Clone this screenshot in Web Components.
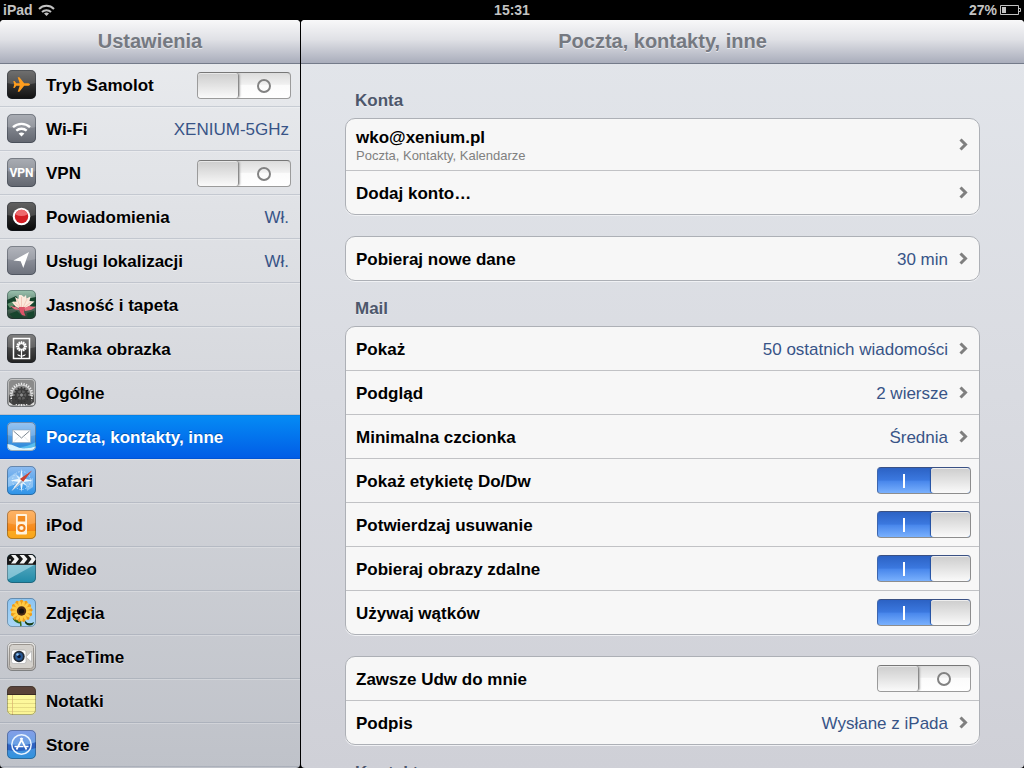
<!DOCTYPE html>
<html lang="pl">
<head>
<meta charset="utf-8">
<meta name="viewport" content="width=device-width, initial-scale=1">
<title>Ustawienia</title>
<style>
  html, body { margin: 0; height: 100%; background: #000; }
  body { font-family: "Liberation Sans", Arial, Helvetica, sans-serif; overflow: hidden; }
</style>
</head>
<body>
<settings-app>
  <status-bar slot="status"></status-bar>
  <settings-pane slot="side" heading="Ustawienia" kind="side">
    <nav-row icon="plane" type="switch">Tryb Samolot</nav-row>
    <nav-row icon="wifi" value="XENIUM-5GHz">Wi-Fi</nav-row>
    <nav-row icon="vpn" type="switch">VPN</nav-row>
    <nav-row icon="alerts" value="Wł.">Powiadomienia</nav-row>
    <nav-row icon="location" value="Wł.">Usługi lokalizacji</nav-row>
    <nav-row icon="lotus">Jasność i tapeta</nav-row>
    <nav-row icon="frame">Ramka obrazka</nav-row>
    <nav-row icon="gear">Ogólne</nav-row>
    <nav-row icon="mail" selected>Poczta, kontakty, inne</nav-row>
    <nav-row icon="safari">Safari</nav-row>
    <nav-row icon="ipod">iPod</nav-row>
    <nav-row icon="video">Wideo</nav-row>
    <nav-row icon="photos">Zdjęcia</nav-row>
    <nav-row icon="facetime">FaceTime</nav-row>
    <nav-row icon="notes">Notatki</nav-row>
    <nav-row icon="store">Store</nav-row>
  </settings-pane>
  <settings-pane slot="main" heading="Poczta, kontakty, inne" kind="main">
    <settings-group heading="Konta">
      <group-row detail="Poczta, Kontakty, Kalendarze">wko@xenium.pl</group-row>
      <group-row>Dodaj konto…</group-row>
    </settings-group>
    <settings-group>
      <group-row value="30 min">Pobieraj nowe dane</group-row>
    </settings-group>
    <settings-group heading="Mail">
      <group-row value="50 ostatnich wiadomości">Pokaż</group-row>
      <group-row value="2 wiersze">Podgląd</group-row>
      <group-row value="Średnia">Minimalna czcionka</group-row>
      <group-row type="switch" checked>Pokaż etykietę Do/Dw</group-row>
      <group-row type="switch" checked>Potwierdzaj usuwanie</group-row>
      <group-row type="switch" checked>Pobieraj obrazy zdalne</group-row>
      <group-row type="switch" checked>Używaj wątków</group-row>
    </settings-group>
    <settings-group>
      <group-row type="switch">Zawsze Udw do mnie</group-row>
      <group-row value="Wysłane z iPada">Podpis</group-row>
    </settings-group>
    <settings-group heading="Kontakty"></settings-group>
  </settings-pane>
</settings-app>

<script>
const switchCss = `
  input {
    appearance: none; box-sizing: border-box; flex: none; display: flex; align-items: center;
    width: 94px; height: 27px; margin: 0; border: 1px solid #9b9b9b; border-top-color: #777; border-radius: 4px;
    background: linear-gradient(#dcdcdc, #f0f0f0 45%, #fbfbfb 50%, #fff); overflow: hidden; cursor: pointer;
  }
  input::before {
    content: ""; box-sizing: border-box; width: 41px; height: 25px; border-right: 1px solid #8b8b8b;
    border-radius: 3px; background: linear-gradient(#cdcdcd, #e3e3e3 50%, #fafafa);
    box-shadow: inset 0 1px #e8e8e8, 1px 0 2px #aaa;
  }
  input::after {
    content: ""; box-sizing: border-box; width: 14px; height: 14px; margin-left: 18px;
    border: 2px solid #828282; border-radius: 50%;
  }
  input:checked {
    flex-direction: row-reverse; border-color: #8d8d8d; border-left-color: #3d66ae; border-top-color: #3a5184;
    background: linear-gradient(#2c62c4, #3b78df 48%, #4a88ec 54%, #79b0fd);
  }
  input:checked::before { width: 39px; border: 0; box-shadow: inset 0 1px #eee, -1px 0 1px #244f9d; }
  input:checked::after {
    width: 2px; height: 14px; margin: 0 26px 0 0; border: 0; border-radius: 0; background: #fff;
  }`;

const petals = (n, cx, cy, rx, ry, d, fill, turn = 0) => Array.from({ length: n }, (_, i) =>
  `<ellipse cx="${cx}" cy="${cy - d}" rx="${rx}" ry="${ry}" fill="${fill}" transform="rotate(${turn + i * 360 / n} ${cx} ${cy})"/>`).join("");
const teeth = (n, cx, cy, r, w, fill) => Array.from({ length: n }, (_, i) =>
  `<rect x="${cx - w / 2}" y="${cy - r}" width="${w}" height="3" fill="${fill}" transform="rotate(${i * 360 / n} ${cx} ${cy})"/>`).join("");

/* Each icon: top colour, bottom colour, artwork on a 29-unit square, and whether it has the glossy upper half. */
const icons = {
  plane: ["#555", "#111", `<path d="M23 14.5c0-.9-1.4-1.3-2.6-1.3h-3.2L12.4 7.3h-1.7l2 5.9H9.3L7.6 11H6.3l.9 3.5-.9 3.5h1.3l1.7-2.2h3.4l-2 5.9h1.7l4.8-5.9h3.2c1.2 0 2.6-.4 2.6-1.3z" fill="#ff9d1d"/>`, 1],
  wifi: ["#9a9ea6", "#62666f", `<g fill="none" stroke="#fff" stroke-width="2.4"><path d="M6 13.2a12.5 12.5 0 0 1 17 0M9.3 16.7a8 8 0 0 1 10.4 0"/></g><path d="M11.6 19.6q2.9-2.2 5.8 0l-2.9 3z" fill="#fff"/>`, 1],
  vpn: ["#9a9ea6", "#62666f", `<text x="14.5" y="19" text-anchor="middle" font-family="Roboto, Liberation Sans, sans-serif" font-weight="700" font-size="12" fill="#fff">VPN</text>`, 1],
  alerts: ["#444", "#080808", `<circle cx="14.5" cy="14.5" r="8.8" fill="#fff"/><circle cx="14.5" cy="14.5" r="6.7" fill="#d41e24"/><path d="M8.5 12.5a6.2 6.2 0 0 1 12 0q-6 3-12 0" fill="#ee6a6d"/>`, 1],
  location: ["#a4a7b0", "#6c707b", `<path d="M22 6L16.3 22l-2.6-6.800L6.500 14.600z" fill="#fff"/>`, 1],
  lotus: ["#9cc4b0", "#20382b", `<path d="M0 10l9-4 4 5-6 7-7 2zM19 9l10-2v9l-8 3zM2 24l8-3 6 6-8 2zM20 23l7-2v6l-6 2z" fill="#17452d"/><path d="M0 14l7-3 2 3-6 4z" fill="#5b8d6a"/><path d="M14.5 5l2.500 2 2-2 .500 3.500 4-2-1 4.500 5 .500-4.500 4-5 3.500h-5l-5-3L5 12l4.500-.500L8 7l3.500 2 .500-4z" fill="#fbe9dc"/><path d="M14.5 7v11M10 9l3.500 8.500M20 9l-4 8.500M7.500 12.500l5.500 5M23.500 12.500l-6.500 5" stroke="#eebfae" stroke-width=".7"/><path d="M3 16l6 1 4 3-5-.500zM17 18l5-2 7 1-5 3-6 1z" fill="#e8707f"/><path d="M11.500 17h6.500l-1 5 1.500 4-3.500-1-2-3z" fill="#dc5468"/>`, 0],
  frame: ["#676767", "#222", `<rect x="6.500" y="4.500" width="16" height="20" fill="none" stroke="#fff" stroke-width="1.500"/>${petals(12, 14.5, 12.5, 1, 2, 3.6, "#fff")}<circle cx="14.500" cy="12.500" r="2.200" fill="#555"/><path d="M14.500 17v7" stroke="#fff" stroke-width="1.200"/><path d="M14.500 22.500q-1.500-2.500-4.500-2 1.500 2.500 4.500 2zm0 0q1.500-2.500 4.500-2-1.500 2.500-4.500 2z" fill="#fff"/>`, 1],
  gear: ["#c4c4c4", "#9a9a9a", `<rect x="2" y="2" width="25" height="25" rx="3" fill="#8a8a8a"/><path d="M2 17h25v10H2z" fill="#484848"/>${teeth(26, 14.5, 16.5, 11.8, 1.2, "#eee")}<circle cx="14.500" cy="16.500" r="10" fill="#d5d5d5"/><circle cx="14.500" cy="16.500" r="9" fill="#858585"/><path d="M5 18h19v8H5z" fill="#404040"/>${teeth(14, 14.5, 17, 8, 1.6, "#333")}<circle cx="14.500" cy="17" r="6.800" fill="#3c3c3c"/><circle cx="14.500" cy="17" r="4.800" fill="#5e5e5e"/><path d="M14.500 11v12M9.300 14l10.400 6M19.700 14L9.300 20" stroke="#3a3a3a" stroke-width="1.200"/><circle cx="14.500" cy="17" r="2" fill="#8d8d8d" stroke="#333" stroke-width=".7"/><path d="M2 24l4 3H2zM27 24l-4 3h4z" fill="#ddd"/>`, 0],
  mail: ["#86b9ee", "#2384d8", `<path d="M0 22q5 0 9 2.500t10 1.500 10-2v5H0z" fill="#d8f3ff"/><path d="M12 25q8 0 17-5v4q-8 4-17 1z" fill="#58bdee"/><rect x="5.500" y="8" width="18" height="12.500" fill="#fff" stroke="#8ca5bc" stroke-width=".6"/><path d="M6.500 9l8 7 8-7" fill="none" stroke="#7d8993"/><path d="M6.500 20l5.500-5.500M22.500 20L17 14.500" fill="none" stroke="#dde3e8" stroke-width=".8"/>`, 1],
  safari: ["#8fbcf0", "#2c93e8", `<path d="M1 12l7-5 5 4-4 7-8 3zM18 16l8-4v9l-6 4z" fill="#c5e2fb" opacity=".5"/><circle cx="14.500" cy="14.500" r="9" fill="none" stroke="#d9efff" stroke-dasharray="1 2"/><path d="M14.500 3l1.500 9.500 9.500 2-9.500 1.700-1.500 9.800-1.500-9.800-9.500-1.700 9.500-2z" fill="#eaf7ff"/><path d="M9 9l5.500 3.500L20 20l-6.500-3.500z" fill="#d7eeff"/><path d="M25 4.500L12.800 13l3.200 3z" fill="#c94331"/><path d="M4.500 25l8.300-12 3.200 3z" fill="#f9f9f9"/><path d="M4.500 25L14.500 14.500l1.500 1.500z" fill="#9eb9d2"/>`, 0],
  ipod: ["#ffa64a", "#f07a00", `<path d="M0 21h29v8H0z" fill="#ffc12b" opacity=".6"/><rect x="9" y="4" width="11" height="20.500" rx="1" fill="#fff3df"/><rect x="10.800" y="6" width="7.400" height="5.500" fill="#f18a20"/><circle cx="14.500" cy="18" r="3.100" fill="none" stroke="#f07e17" stroke-width="2"/>`, 1],
  video: ["#6fb4c8", "#1f8aa8", `<path d="M0 10h29L0 26z" fill="#bfe6f0" opacity=".55"/><path d="M0 0h29v10H0z" fill="#161616"/><path d="M4 1h4.500l3.500 4-3.500 4.500H4L7.500 5zm8.500 0H17l3.500 4-3.500 4.500h-4.500L16 5zm8.500 0h4.500L29 5l-3.500 4.500H21L24.500 5z" fill="#f4f4f4"/><circle cx="3" cy="6" r="1" fill="#ccc"/><path d="M0 10.500h29" stroke="#333"/>`, 0],
  photos: ["#8cc4f2", "#a9d6f7", `<path d="M14 19q-1 5 0 9" fill="none" stroke="#376b13" stroke-width="1.500"/><path d="M13.500 25.500q-5 0-8-5 7-1 8 5z" fill="#2f6b1c"/><path d="M17.500 22.500q4 4.500 9.500 1.500-1 4-5 3.500t-4.500-5z" fill="#173d16"/>${petals(13, 14.5, 13, 2.2, 4.4, 6.8, "#ee9d1a")}${petals(13, 14.5, 13, 1.5, 4, 6.4, "#ffcb45", 14)}<circle cx="14.500" cy="13" r="4.700" fill="#4a2a14"/><circle cx="14.500" cy="13" r="2.600" fill="#16120f"/>`, 0],
  facetime: ["#ecebe9", "#b5b1ad", `<rect x="2.500" y="2.500" width="24" height="24" rx="3" fill="#d3d0cb" stroke="#99948e"/><rect x="4.500" y="8" width="14.500" height="13.500" rx="2" fill="#fff" stroke="#aaa" stroke-width=".6"/><path d="M19.500 14.500L24.500 9v11l-5-4.500z" fill="#fff" stroke="#aaa" stroke-width=".6"/><circle cx="12" cy="14.500" r="5.700" fill="#222a35"/><circle cx="12" cy="14.500" r="3.900" fill="#265795"/><circle cx="12" cy="14.500" r="1.800" fill="#0a1733"/><circle cx="10.500" cy="12.500" r="1.200" fill="#93c4ef"/>`, 0],
  notes: ["#fffaa4", "#fbf594", `<path d="M0 0h29v9H0z" fill="#5a4238"/><path d="M0 8.500h29" stroke="#3c2a22"/><path d="M0 13.500h29M0 17.500h29M0 21.500h29M0 25.500h29" stroke="#e6dc84"/><path d="M5.500 9v20" stroke="#d8b070" stroke-width=".7"/>`, 0],
  store: ["#6c8ce4", "#2f93dc", `<path d="M0 14q14 4 29-2v6q-14 5-29 2z" fill="#1b43ac" opacity=".6"/><circle cx="14.500" cy="14.500" r="9.700" fill="none" stroke="#e9f4ff" stroke-width="1.500"/><path d="M15.500 8L9.500 19.500M13.500 8l6 11.500M7.500 16.500h9M18.500 16.500h3" fill="none" stroke="#fff" stroke-width="1.700"/>`, 1],
};

class AppIcon extends HTMLElement {
  connectedCallback() {
    const [top, bottom, art, gloss] = icons[this.getAttribute("name")];
    this.attachShadow({ mode: "open" }).innerHTML = `
      <style>:host { display: block; flex: none; width: 29px; height: 29px } svg { display: block }</style>
      <svg width="29" height="29" viewBox="0 0 29 29" aria-hidden="true">
        <defs>
          <linearGradient id="g" x2="0" y2="1"><stop stop-color="${top}"/><stop offset="1" stop-color="${bottom}"/></linearGradient>
          <clipPath id="c"><rect width="29" height="29" rx="5"/></clipPath>
        </defs>
        <g clip-path="url(#c)">
          <rect width="29" height="29" fill="url(#g)"/>
          ${gloss ? '<path d="M0 0h29v13q-14 4-29 0z" fill="#fff" opacity=".16"/>' : ""}
          ${art}
        </g>
        <rect x=".5" y=".5" width="28" height="28" rx="4.500" fill="none" stroke="#1c2430" stroke-opacity=".35"/>
      </svg>`;
  }
}

class StatusBar extends HTMLElement {
  connectedCallback() {
    this.attachShadow({ mode: "open" }).innerHTML = `
      <style>
        :host { display: grid; grid-template-columns: 1fr auto 1fr; align-items: center; height: 20px; padding: 0 3px;
          box-sizing: border-box; background: #000; color: #c3c3c3; font-size: 14px; line-height: 20px; font-weight: 700 }
        div { display: flex; align-items: center; gap: 5px }
        .end { justify-content: flex-end; gap: 3px }
        svg { display: block }
      </style>
      <div><span>iPad</span>
        <svg width="17" height="12" viewBox="0 0 17 12" role="img" aria-label="Wi-Fi"><g fill="none" stroke="#c3c3c3" stroke-width="2"><path d="M1 5a10.500 10.500 0 0 1 15 0M4 8a6.500 6.500 0 0 1 9 0"/></g><path d="M6 9.500q2.500-2 5 0L8.500 12z" fill="#c3c3c3"/></svg>
      </div>
      <time>15:31</time>
      <div class="end"><span>27%</span>
        <svg width="21" height="11" viewBox="0 0 21 11" role="img" aria-label="Bateria"><path d="M.5.500h18v9H.5zM18.500 3.500h2v3h-2" fill="none" stroke="#c3c3c3"/><path d="M2 2h4v6H2z" fill="#c3c3c3"/></svg>
      </div>`;
  }
}

class SettingsApp extends HTMLElement {
  connectedCallback() {
    this.attachShadow({ mode: "open" }).innerHTML = `
      <style>
        :host { display: flex; flex-direction: column; height: 100vh; background: #000 }
        .panes { flex: 1; min-height: 0; display: grid; grid-template-columns: 300px minmax(0, 1fr); gap: 1px }
        ::slotted(settings-pane) { min-height: 0 }
      </style>
      <slot name="status"></slot>
      <div class="panes"><slot name="side"></slot><slot name="main"></slot></div>`;
  }
}

class SettingsPane extends HTMLElement {
  connectedCallback() {
    const side = this.getAttribute("kind") === "side";
    this.attachShadow({ mode: "open" }).innerHTML = `
      <style>
        :host { display: flex; flex-direction: column; overflow: hidden; border-radius: 4px; background: linear-gradient(#e3e6eb, #cfd0d7) }
        :host([kind="side"]) { background: linear-gradient(#eaecef, #d6d8dd 50%, #bfc2c9) }
        header { position: relative; flex: none; box-sizing: border-box; height: 44px; border-bottom: 1px solid #747b8a;
          background: linear-gradient(#f8f8f9, #e0e1e6 45%, #a9adbb) }
        h1 { margin: 0; color: #757981; font-size: 20px; line-height: 42px; text-align: center; text-shadow: 0 1px #e8e9ed }
        .body { flex: 1; min-height: 0; overflow: hidden }
        .side { margin-top: -1px }
        .main { padding: 9px 44px 0 }
      </style>
      <header><h1>${this.getAttribute("heading")}</h1></header>
      ${side ? '<nav class="body side"><slot></slot></nav>' : '<main class="body main"><slot></slot></main>'}`;
  }
}

class NavRow extends HTMLElement {
  connectedCallback() {
    const isSwitch = this.getAttribute("type") === "switch";
    const value = this.getAttribute("value");
    const inner = `<app-icon name="${this.getAttribute("icon")}"></app-icon><span class="label"><slot></slot></span>`;
    this.attachShadow({ mode: "open" }).innerHTML = `
      <style>
        :host { display: block; font-size: 17px; line-height: 20px; color: #000 }
        .row { display: flex; align-items: center; gap: 10px; box-sizing: border-box; height: 44px; padding: 0 11px 0 7px;
          border-bottom: 1px solid rgb(110 125 145 / .25); box-shadow: inset 0 1px rgb(255 255 255 / .25);
          color: inherit; text-decoration: none }
        .switch { padding-right: 9px }
        .label, .value { padding-top: 2px }
        .label { flex: 1; font-weight: 700; white-space: nowrap; text-shadow: 0 1px rgb(255 255 255 / .5) }
        .value { color: #385487 }
        :host([selected]) { color: #fff }
        :host([selected]) .row { background: linear-gradient(#058cf5, #015de6); border-color: #0154d4; box-shadow: inset 0 1px #0482e8 }
        :host([selected]) .label { text-shadow: 0 -1px rgb(0 40 110 / .5) }
        ${switchCss}
        input { margin-top: 2px }
      </style>
      ${isSwitch ? `<label class="row switch">${inner}<input type="checkbox" role="switch"></label>`
        : `<a class="row" href="#${this.getAttribute("icon")}">${inner}${value ? `<span class="value">${value}</span>` : ""}</a>`}`;
  }
}

class SettingsGroup extends HTMLElement {
  connectedCallback() {
    const heading = this.getAttribute("heading");
    this.attachShadow({ mode: "open" }).innerHTML = `
      <style>
        :host { display: block }
        h2 { margin: 0; padding: 18px 10px 7px; color: #4d576b; font-size: 17px; line-height: 20px; text-shadow: 0 1px #eceef2 }
        .card { border: 1px solid #adb0b6; border-radius: 10px; background: #f7f7f7; box-shadow: 0 1px #f0f1f4; overflow: hidden }
        .gap { margin-top: 21px }
        ::slotted(group-row:not(:last-child)) { border-bottom: 1px solid #c1c2c5 }
      </style>
      ${heading ? `<h2>${heading}</h2>` : ""}
      ${this.children.length ? `<section class="card${heading ? "" : " gap"}"><slot></slot></section>` : ""}`;
  }
}

class GroupRow extends HTMLElement {
  connectedCallback() {
    const isSwitch = this.getAttribute("type") === "switch";
    const value = this.getAttribute("value");
    const detail = this.getAttribute("detail");
    const text = `<span class="label"><slot></slot>${detail ? `<small>${detail}</small>` : ""}</span>`;
    this.attachShadow({ mode: "open" }).innerHTML = `
      <style>
        :host { display: block; font-size: 17px; line-height: 20px; color: #000 }
        .row { display: flex; align-items: center; gap: 11px; box-sizing: border-box; min-height: 43px; padding: 0 11px 0 10px;
          color: inherit; text-decoration: none }
        .row.tall { min-height: 51px }
        .switch { padding-right: 8px }
        .label, .value { padding-top: 2px }
        .label { flex: 1; font-weight: 700 }
        small { display: block; color: #808080; font-size: 13px; line-height: 16px; font-weight: 400 }
        .value { color: #385487 }
        svg { display: block; flex: none }
        ${switchCss}
      </style>
      ${isSwitch ? `<label class="row switch">${text}<input type="checkbox" role="switch"${this.hasAttribute("checked") ? " checked" : ""}></label>`
        : `<a class="row${detail ? " tall" : ""}" href="#details">${text}${value ? `<span class="value">${value}</span>` : ""}
            <svg width="9" height="13" viewBox="0 0 9 13" aria-hidden="true"><path d="M1.500 1.500l5 5-5 5" fill="none" stroke="#7f7f7f" stroke-width="3"/></svg></a>`}`;
  }
}

customElements.define("app-icon", AppIcon);
customElements.define("status-bar", StatusBar);
customElements.define("settings-app", SettingsApp);
customElements.define("settings-pane", SettingsPane);
customElements.define("nav-row", NavRow);
customElements.define("settings-group", SettingsGroup);
customElements.define("group-row", GroupRow);
</script>
</body>
</html>
